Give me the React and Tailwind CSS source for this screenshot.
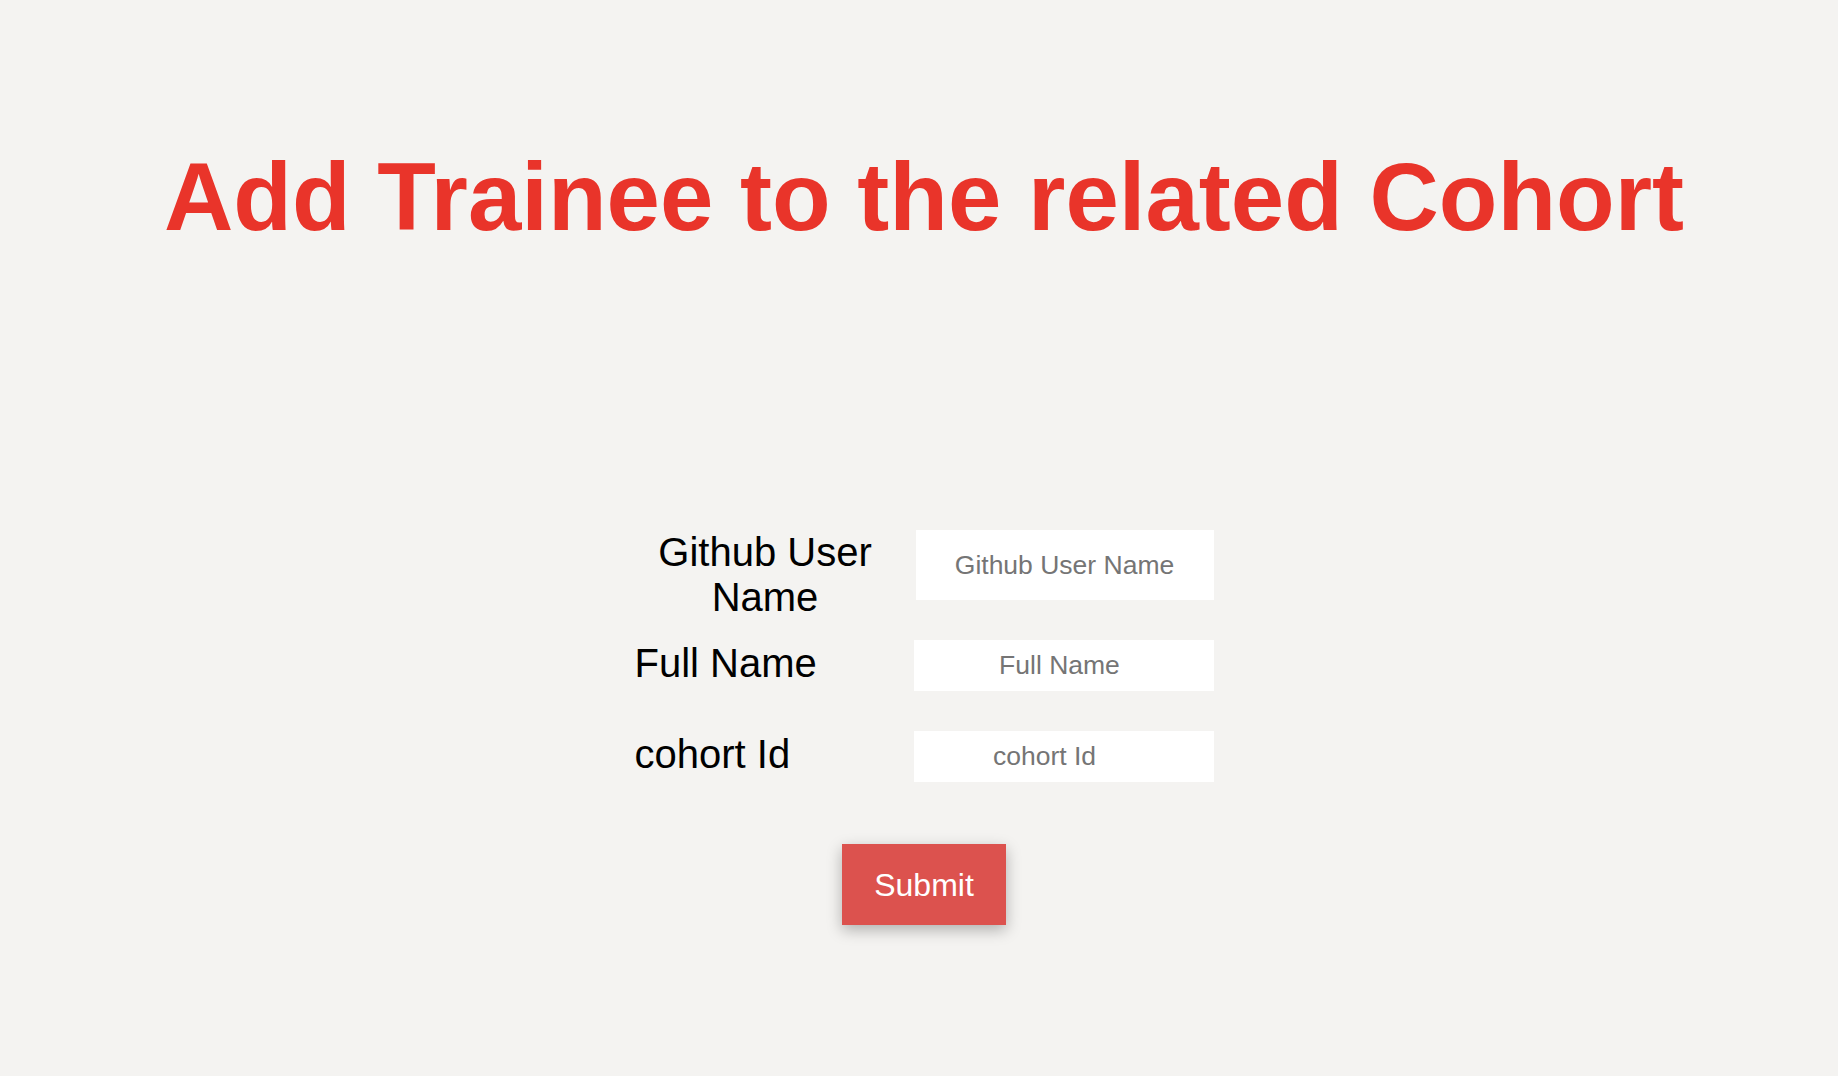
export default function App() {
  return (
    <div className="min-h-screen w-full bg-[#f4f3f1] pl-[10px] font-['Liberation_Sans',Arial,sans-serif]">
      <h1 className="pt-[142px] text-center text-[96px] font-bold leading-[110px] text-[#e9342a]">
        Add Trainee to the related Cohort
      </h1>
      <form className="mt-[278px] flex flex-col items-center" onSubmit={(e) => e.preventDefault()}>
        <div className="grid grid-cols-[261px_300px] items-start gap-x-[18px]">
          <label className="text-center text-[40px] leading-[45px] text-black">Github User Name</label>
          <input
            type="text"
            placeholder="Github User Name"
            className="ml-[2px] h-[70px] w-[298px] bg-white text-center text-[26.5px] text-black outline-none placeholder:text-[#757575]"
          />
        </div>
        <div className="mt-[19px] grid grid-cols-[261px_300px] items-start gap-x-[18px]">
          <label className="mt-[2px] text-left text-[40px] leading-[45px] text-black">Full Name</label>
          <input
            type="text"
            placeholder="Full Name"
            className="mt-px h-[51px] w-[300px] bg-white pr-[8px] text-center text-[26.5px] text-black outline-none placeholder:text-[#757575]"
          />
        </div>
        <div className="mt-[39px] grid grid-cols-[261px_300px] items-start gap-x-[18px]">
          <label className="mt-[2px] text-left text-[40px] leading-[45px] text-black">cohort Id</label>
          <input
            type="text"
            placeholder="cohort Id"
            className="mt-px h-[51px] w-[300px] bg-white pr-[38px] text-center text-[26.5px] text-black outline-none placeholder:text-[#757575]"
          />
        </div>
        <button
          type="submit"
          className="mt-[62px] h-[81px] w-[164px] bg-[#dc524e] text-[32px] text-white shadow-[0_5px_14px_rgba(0,0,0,0.28)]"
        >
          Submit
        </button>
      </form>
    </div>
  );
}
